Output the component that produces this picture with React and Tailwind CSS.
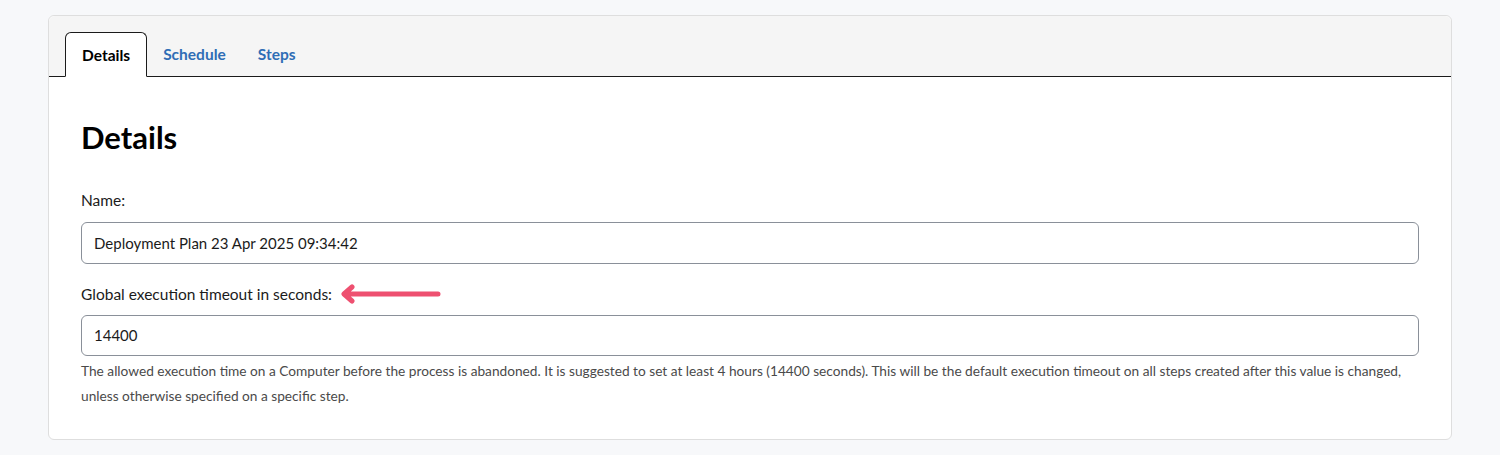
import React from 'react';

const Arrow = () => (
  <svg width="104" height="20" viewBox="0 0 104 20" className="ml-[6px]">
    <path
      d="M100 10 H8 M14 3 L6 10 L14 17"
      fill="none"
      stroke="#ee5070"
      strokeWidth="5"
      strokeLinecap="round"
      strokeLinejoin="round"
    />
  </svg>
);

export default function App() {
  const tabs = ['Details', 'Schedule', 'Steps'];

  return (
    <div className="min-h-[455px] bg-[#f7f8fa] px-12 pt-[15px] font-['Lato','Noto_Sans',sans-serif] text-[#1b1b1b]">
      <div className="rounded-md border border-[#dedede] bg-white">
        {/* Tabs */}
        <div className="flex rounded-t-md border-b border-[#1b1b1b] bg-[#f5f5f5] px-4 pt-4">
          {tabs.map((tab, i) => (
            <div
              key={tab}
              className={
                i === 0
                  ? '-mb-px flex h-[45px] items-center rounded-t-md border border-b-white border-[#1b1b1b] bg-white px-4 pt-[2px] text-[15.5px] font-bold text-black'
                  : 'flex h-[44px] items-center px-4 pt-[2px] text-[15.5px] font-bold text-[#2f6db5]'
              }
            >
              {tab}
            </div>
          ))}
        </div>

        {/* Body */}
        <div className="px-8 pb-[31px] pt-[40px]">
          <h1 className="text-[31px] font-bold leading-[40px] text-black">Details</h1>

          <div className="mt-[33px] text-[15.5px] leading-[20px]">Name:</div>
          <div className="mt-[12px] flex h-[42px] items-center rounded-md border border-[#8a9099] px-[12px] text-[15px]">
            Deployment Plan 23 Apr 2025 09:34:42
          </div>

          <div className="mt-[20px] flex items-center text-[15.5px] leading-[20px]">
            Global execution timeout in seconds:
            <Arrow />
          </div>
          <div className="mt-[11px] flex h-[41px] items-center rounded-md border border-[#8a9099] px-[12px] text-[15px]">
            14400
          </div>
          <p className="mt-[2px] text-[13.7px] leading-[25px] text-[#4a4a4a]">
            The allowed execution time on a Computer before the process is abandoned. It is suggested to set at least 4 hours (14400 seconds). This will be the default execution timeout on all steps created after this value is changed, unless otherwise specified on a specific step.
          </p>
        </div>
      </div>
    </div>
  );
}
